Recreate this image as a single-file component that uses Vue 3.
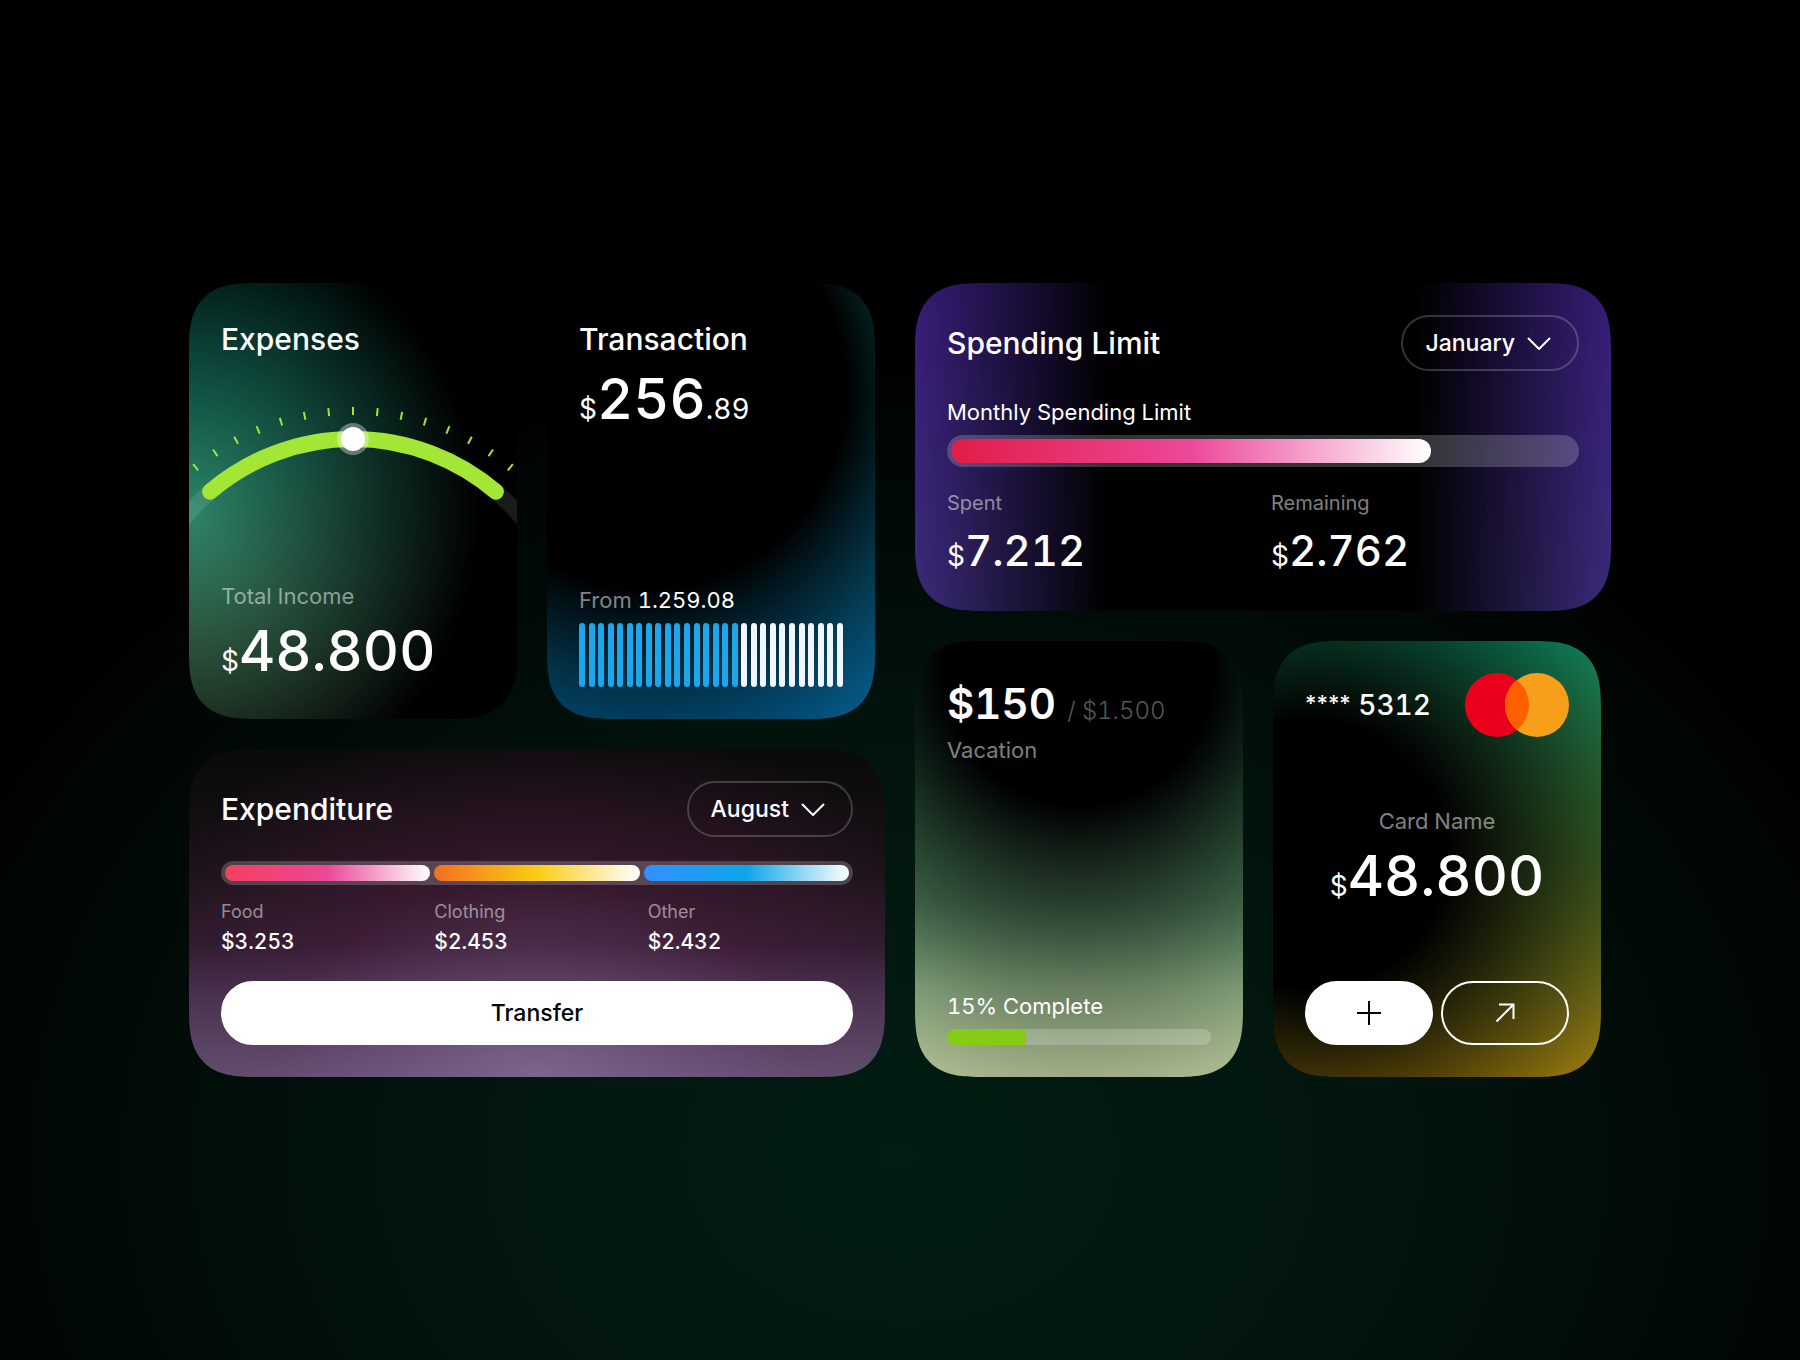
<script setup>
import { ref } from 'vue'

const months = [
  'January', 'February', 'March', 'April', 'May', 'June',
  'July', 'August', 'September', 'October', 'November', 'December',
]

const spendingMonth = ref('January')
const expenditureMonth = ref('August')

const ticks = Array.from({ length: 15 }, (_, i) => (i - 7) * 5.625)

const barCount = 28
const barsUsed = 17

const categories = [
  { name: 'Food', amount: '$3.253', tone: 'rose' },
  { name: 'Clothing', amount: '$2.453', tone: 'amber' },
  { name: 'Other', amount: '$2.432', tone: 'sky' },
]

const spentShare = 77
const vacationShare = 30
</script>

<template>
  <main class="page">
    <div class="board">
      <div class="column">
        <div class="pair">
          <section class="card tall expenses">
            <h2 class="title">Expenses</h2>
            <svg class="gauge" viewBox="0 0 328 124" aria-hidden="true">
              <circle class="gauge-track" cx="164" cy="254" r="220" />
              <path class="gauge-arc" d="M21.1 86.7A220 220 0 0 1 306.9 86.7" />
              <line
                v-for="angle in ticks"
                :key="angle"
                class="gauge-tick"
                x1="164"
                y1="2"
                x2="164"
                y2="10"
                :transform="`rotate(${angle} 164 254)`"
              />
              <circle cx="164" cy="34" r="16" fill="#fff" fill-opacity="0.35" />
              <circle cx="164" cy="34" r="12" fill="#fff" />
            </svg>
            <div class="push">
              <p class="label spaced">Total Income</p>
              <p class="amount"><span class="unit">$</span>48.800</p>
            </div>
          </section>

          <section class="card tall transaction">
            <h2 class="title">Transaction</h2>
            <p class="amount"><span class="unit">$</span>256<span class="cents">.89</span></p>
            <div class="push">
              <p class="label bright"><span class="muted">From</span> 1.259.08</p>
              <div class="bars">
                <span v-for="n in barCount" :key="n" class="bar" :class="{ used: n <= barsUsed }"></span>
              </div>
            </div>
          </section>
        </div>

        <section class="card expenditure">
          <header class="head">
            <h2 class="title">Expenditure</h2>
            <div class="picker">
              <select v-model="expenditureMonth" aria-label="Expenditure month">
                <option v-for="m in months" :key="m">{{ m }}</option>
              </select>
              <svg class="chevron" viewBox="0 0 24 14" aria-hidden="true"><path d="M1.5 1.5 12 12 22.5 1.5" /></svg>
            </div>
          </header>
          <div class="segments">
            <span v-for="c in categories" :key="c.name" class="segment" :class="c.tone"></span>
          </div>
          <dl class="categories">
            <div v-for="c in categories" :key="c.name">
              <dt>{{ c.name }}</dt>
              <dd>{{ c.amount }}</dd>
            </div>
          </dl>
          <button type="button" class="button transfer">Transfer</button>
        </section>
      </div>

      <div class="column">
        <section class="card spending">
          <header class="head">
            <h2 class="title">Spending Limit</h2>
            <div class="picker">
              <select v-model="spendingMonth" aria-label="Spending month">
                <option v-for="m in months" :key="m">{{ m }}</option>
              </select>
              <svg class="chevron" viewBox="0 0 24 14" aria-hidden="true"><path d="M1.5 1.5 12 12 22.5 1.5" /></svg>
            </div>
          </header>
          <p id="limit-label" class="label bright limit-label">Monthly Spending Limit</p>
          <div
            class="limit"
            role="progressbar"
            aria-labelledby="limit-label"
            :aria-valuenow="spentShare"
            aria-valuemin="0"
            aria-valuemax="100"
          >
            <div class="limit-fill" :style="{ width: spentShare + '%' }"></div>
          </div>
          <dl class="totals">
            <div>
              <dt>Spent</dt>
              <dd><span class="unit">$</span>7.212</dd>
            </div>
            <div>
              <dt>Remaining</dt>
              <dd><span class="unit">$</span>2.762</dd>
            </div>
          </dl>
        </section>

        <div class="pair">
          <section class="card tall vacation">
            <p class="saved">$150 <span class="goal">/ $1.500</span></p>
            <p class="label">Vacation</p>
            <div class="push">
              <p id="vacation-label" class="label bright">15% Complete</p>
              <div
                class="meter"
                role="progressbar"
                aria-labelledby="vacation-label"
                aria-valuenow="15"
                aria-valuemin="0"
                aria-valuemax="100"
              >
                <div class="meter-fill" :style="{ width: vacationShare + '%' }"></div>
              </div>
            </div>
          </section>

          <section class="card tall wallet">
            <div class="wallet-head">
              <p class="number"><span class="mask">****</span> 5312</p>
              <svg class="brand" viewBox="0 0 104 64" role="img" aria-label="Mastercard">
                <circle cx="32" cy="32" r="32" fill="#eb001b" />
                <circle cx="72" cy="32" r="32" fill="#f79e1b" />
                <path fill="#ff5f00" d="M52 7.02a32 32 0 0 1 0 49.96 32 32 0 0 1 0-49.96z" />
              </svg>
            </div>
            <div class="balance">
              <p class="label spaced">Card Name</p>
              <p class="amount"><span class="unit">$</span>48.800</p>
            </div>
            <div class="actions">
              <button type="button" class="button" aria-label="Add">
                <svg viewBox="0 0 24 24" aria-hidden="true"><path d="M12 0v24M0 12h24" /></svg>
              </button>
              <button type="button" class="button outline" aria-label="Send">
                <svg viewBox="0 0 24 24" aria-hidden="true"><path d="M3.5 20.5 20.5 3.5M6 3.5h14.5V18" /></svg>
              </button>
            </div>
          </section>
        </div>
      </div>
    </div>
  </main>
</template>

<style>
body {
  margin: 0;
  background: #000;
}
</style>

<style scoped>
.page {
  box-sizing: border-box;
  min-height: 100vh;
  padding: 32px;
  display: flex;
  align-items: center;
  justify-content: center;
  background: radial-gradient(ellipse 60% 62% at 50% 85%, #021d13 0%, #02150e 45%, #000 100%) #000;
  color: #fff;
  font-family: Inter, "Liberation Sans", sans-serif;
  font-size: 22px;
  font-variant-numeric: tabular-nums;
}

.page * {
  box-sizing: border-box;
}

h2,
p,
dl,
dd {
  margin: 0;
}

.board {
  display: flex;
  gap: 30px;
  width: 100%;
  max-width: 1422px;
}

.column {
  flex: 1;
  display: flex;
  flex-direction: column;
  gap: 30px;
  min-width: 0;
}

.pair {
  display: flex;
  gap: 30px;
}

.card {
  display: flex;
  flex-direction: column;
  padding: 32px;
  border-radius: 68px;
  corner-shape: superellipse(1.5);
  overflow: hidden;
}

.tall {
  flex: 0 1 328px;
  min-height: 436px;
}

.push {
  margin-top: auto;
}

.title {
  font-size: 30px;
  font-weight: 500;
  line-height: 48px;
}

.head {
  display: flex;
  align-items: center;
  justify-content: space-between;
}

.label {
  line-height: 30px;
  color: rgb(255 255 255 / 50%);
}

.bright {
  color: #fff;
}

.muted {
  color: rgb(255 255 255 / 50%);
}

.spaced {
  margin-bottom: 4px;
}

.amount {
  font-size: 56px;
  font-weight: 500;
  line-height: 72px;
  white-space: nowrap;
}

.unit,
.cents {
  font-size: 28px;
  font-weight: 400;
  line-height: 28px;
}

/* Backgrounds */

.expenses {
  background:
    radial-gradient(ellipse 290px 300px at 0 53%, transparent, #000),
    linear-gradient(180deg, #10907c, #2f8467 55%, #58966a);
}

.transaction {
  background:
    radial-gradient(circle 400px at 30% 24%, #000 50%, transparent),
    linear-gradient(180deg, #18a896, #0c86b0 50%, #045c8e);
}

.expenditure {
  background:
    linear-gradient(0deg, rgb(140 130 175 / 42%), rgb(140 130 175 / 0%) 40%),
    radial-gradient(
      ellipse 70% 110% at 50% 100%,
      rgb(145 105 150 / 60%),
      rgb(105 62 102 / 60%) 30%,
      rgb(80 30 65 / 50%) 55%,
      rgb(80 30 65 / 0%)
    ),
    linear-gradient(180deg, #0a0a0a, #1a1218 40%, #32243a 75%, #3c2d3e);
}

.spending {
  background:
    linear-gradient(90deg, transparent, #000 28%, #000 72%, transparent),
    linear-gradient(180deg, #371c78, #3b2b79);
}

.vacation {
  background:
    radial-gradient(circle 430px at 50% 7%, #000 31%, transparent),
    linear-gradient(180deg, #1eb46e, #64c88c 35%, #78ba86 60%, #a5cb9a 79%, #b0bc92);
}

.wallet {
  background:
    radial-gradient(circle 350px at 12% 49%, #000 38%, transparent),
    linear-gradient(180deg, #0e7f58, #436a28 50%, #98780e);
}

/* Gauge */

.gauge {
  display: block;
  margin: 42px -32px 0;
}

.gauge-track,
.gauge-arc {
  fill: none;
  stroke-width: 16;
}

.gauge-track {
  stroke: rgb(255 255 255 / 10%);
}

.gauge-arc {
  stroke: #a3e635;
  stroke-linecap: round;
}

.gauge-tick {
  stroke: #a3e635;
  stroke-width: 2;
}

/* Transaction bars */

.bars {
  display: flex;
  justify-content: space-between;
  height: 64px;
  margin-top: 8px;
}

.bar {
  width: 6px;
  border-radius: 3px;
  background: #f1f5fd;
}

.bar.used {
  background: #1ca7eb;
}

/* Month picker */

.picker {
  position: relative;
}

.picker select {
  appearance: none;
  field-sizing: content;
  display: block;
  height: 56px;
  padding: 0 62px 0 22px;
  border: 2px solid rgb(255 255 255 / 20%);
  border-radius: 28px;
  background: transparent;
  color: #fff;
  font: 500 23px Inter, "Liberation Sans", sans-serif;
  cursor: pointer;
}

.picker option {
  color: #000;
}

.chevron {
  position: absolute;
  top: 22px;
  right: 28px;
  width: 24px;
  height: 14px;
  fill: none;
  stroke: #fff;
  stroke-width: 2;
  stroke-linecap: round;
  stroke-linejoin: round;
  pointer-events: none;
}

/* Expenditure */

.segments {
  display: flex;
  gap: 4px;
  height: 24px;
  margin-top: 24px;
  padding: 4px;
  border-radius: 12px;
  background: rgb(255 255 255 / 20%);
}

.segment {
  flex: 1;
  border-radius: 8px;
}

.rose {
  background: linear-gradient(90deg, #f43f5e, #ec4899 50%, #fff);
}

.amber {
  background: linear-gradient(90deg, #f36f20, #facc15 50%, #fff);
}

.sky {
  background: linear-gradient(90deg, #3390ff, #0ea5e9 50%, #fff);
}

.categories,
.totals {
  display: flex;
}

.categories {
  gap: 8px;
  margin: 12px 0 24px;
  line-height: 30px;
}

.totals {
  gap: 16px;
  margin-top: 16px;
}

.categories > div,
.totals > div {
  flex: 1;
}

.categories dt,
.totals dt {
  color: rgb(255 255 255 / 50%);
}

.categories dt {
  font-size: 18px;
}

.categories dd {
  font-size: 21px;
  font-weight: 500;
}

.totals dt {
  font-size: 20px;
  line-height: 40px;
}

.totals dd {
  font-size: 42px;
  font-weight: 500;
  line-height: 56px;
}

/* Buttons */

.button {
  display: flex;
  flex: 1;
  align-items: center;
  justify-content: center;
  height: 64px;
  padding: 0;
  border: 2px solid #fff;
  border-radius: 32px;
  background: #fff;
  color: #000;
  font: 500 23px Inter, "Liberation Sans", sans-serif;
  cursor: pointer;
}

.transfer {
  flex: none;
}

.outline {
  background: transparent;
  color: #fff;
}

.button svg {
  width: 24px;
  height: 24px;
  fill: none;
  stroke: currentColor;
  stroke-width: 2;
}

/* Spending limit */

.limit-label {
  margin-top: 26px;
}

.limit {
  height: 32px;
  margin-top: 8px;
  padding: 4px;
  border-radius: 16px;
  background: rgb(255 255 255 / 20%);
}

.limit-fill {
  height: 24px;
  border-radius: 12px;
  background: linear-gradient(90deg, #e11d48, #ec4899 50%, #fff);
}

/* Vacation */

.saved {
  font-size: 42px;
  font-weight: 600;
  line-height: 62px;
  white-space: nowrap;
}

.goal {
  font-size: 24px;
  font-weight: 300;
  line-height: 28px;
  color: rgb(255 255 255 / 35%);
}

.meter {
  height: 16px;
  margin-top: 8px;
  border-radius: 8px;
  background: rgb(255 255 255 / 20%);
  overflow: hidden;
}

.meter-fill {
  height: 100%;
  background: #84cc16;
}

/* Wallet */

.wallet {
  justify-content: space-between;
}

.wallet-head {
  display: flex;
  align-items: center;
  justify-content: space-between;
}

.number {
  font-size: 28px;
  font-weight: 500;
  line-height: 64px;
  white-space: nowrap;
}

.mask {
  font-size: 22px;
  font-variant-numeric: normal;
  line-height: 28px;
  vertical-align: 4px;
}

.brand {
  width: 104px;
  height: 64px;
}

.balance {
  text-align: center;
}

.actions {
  display: flex;
  gap: 8px;
}
</style>
